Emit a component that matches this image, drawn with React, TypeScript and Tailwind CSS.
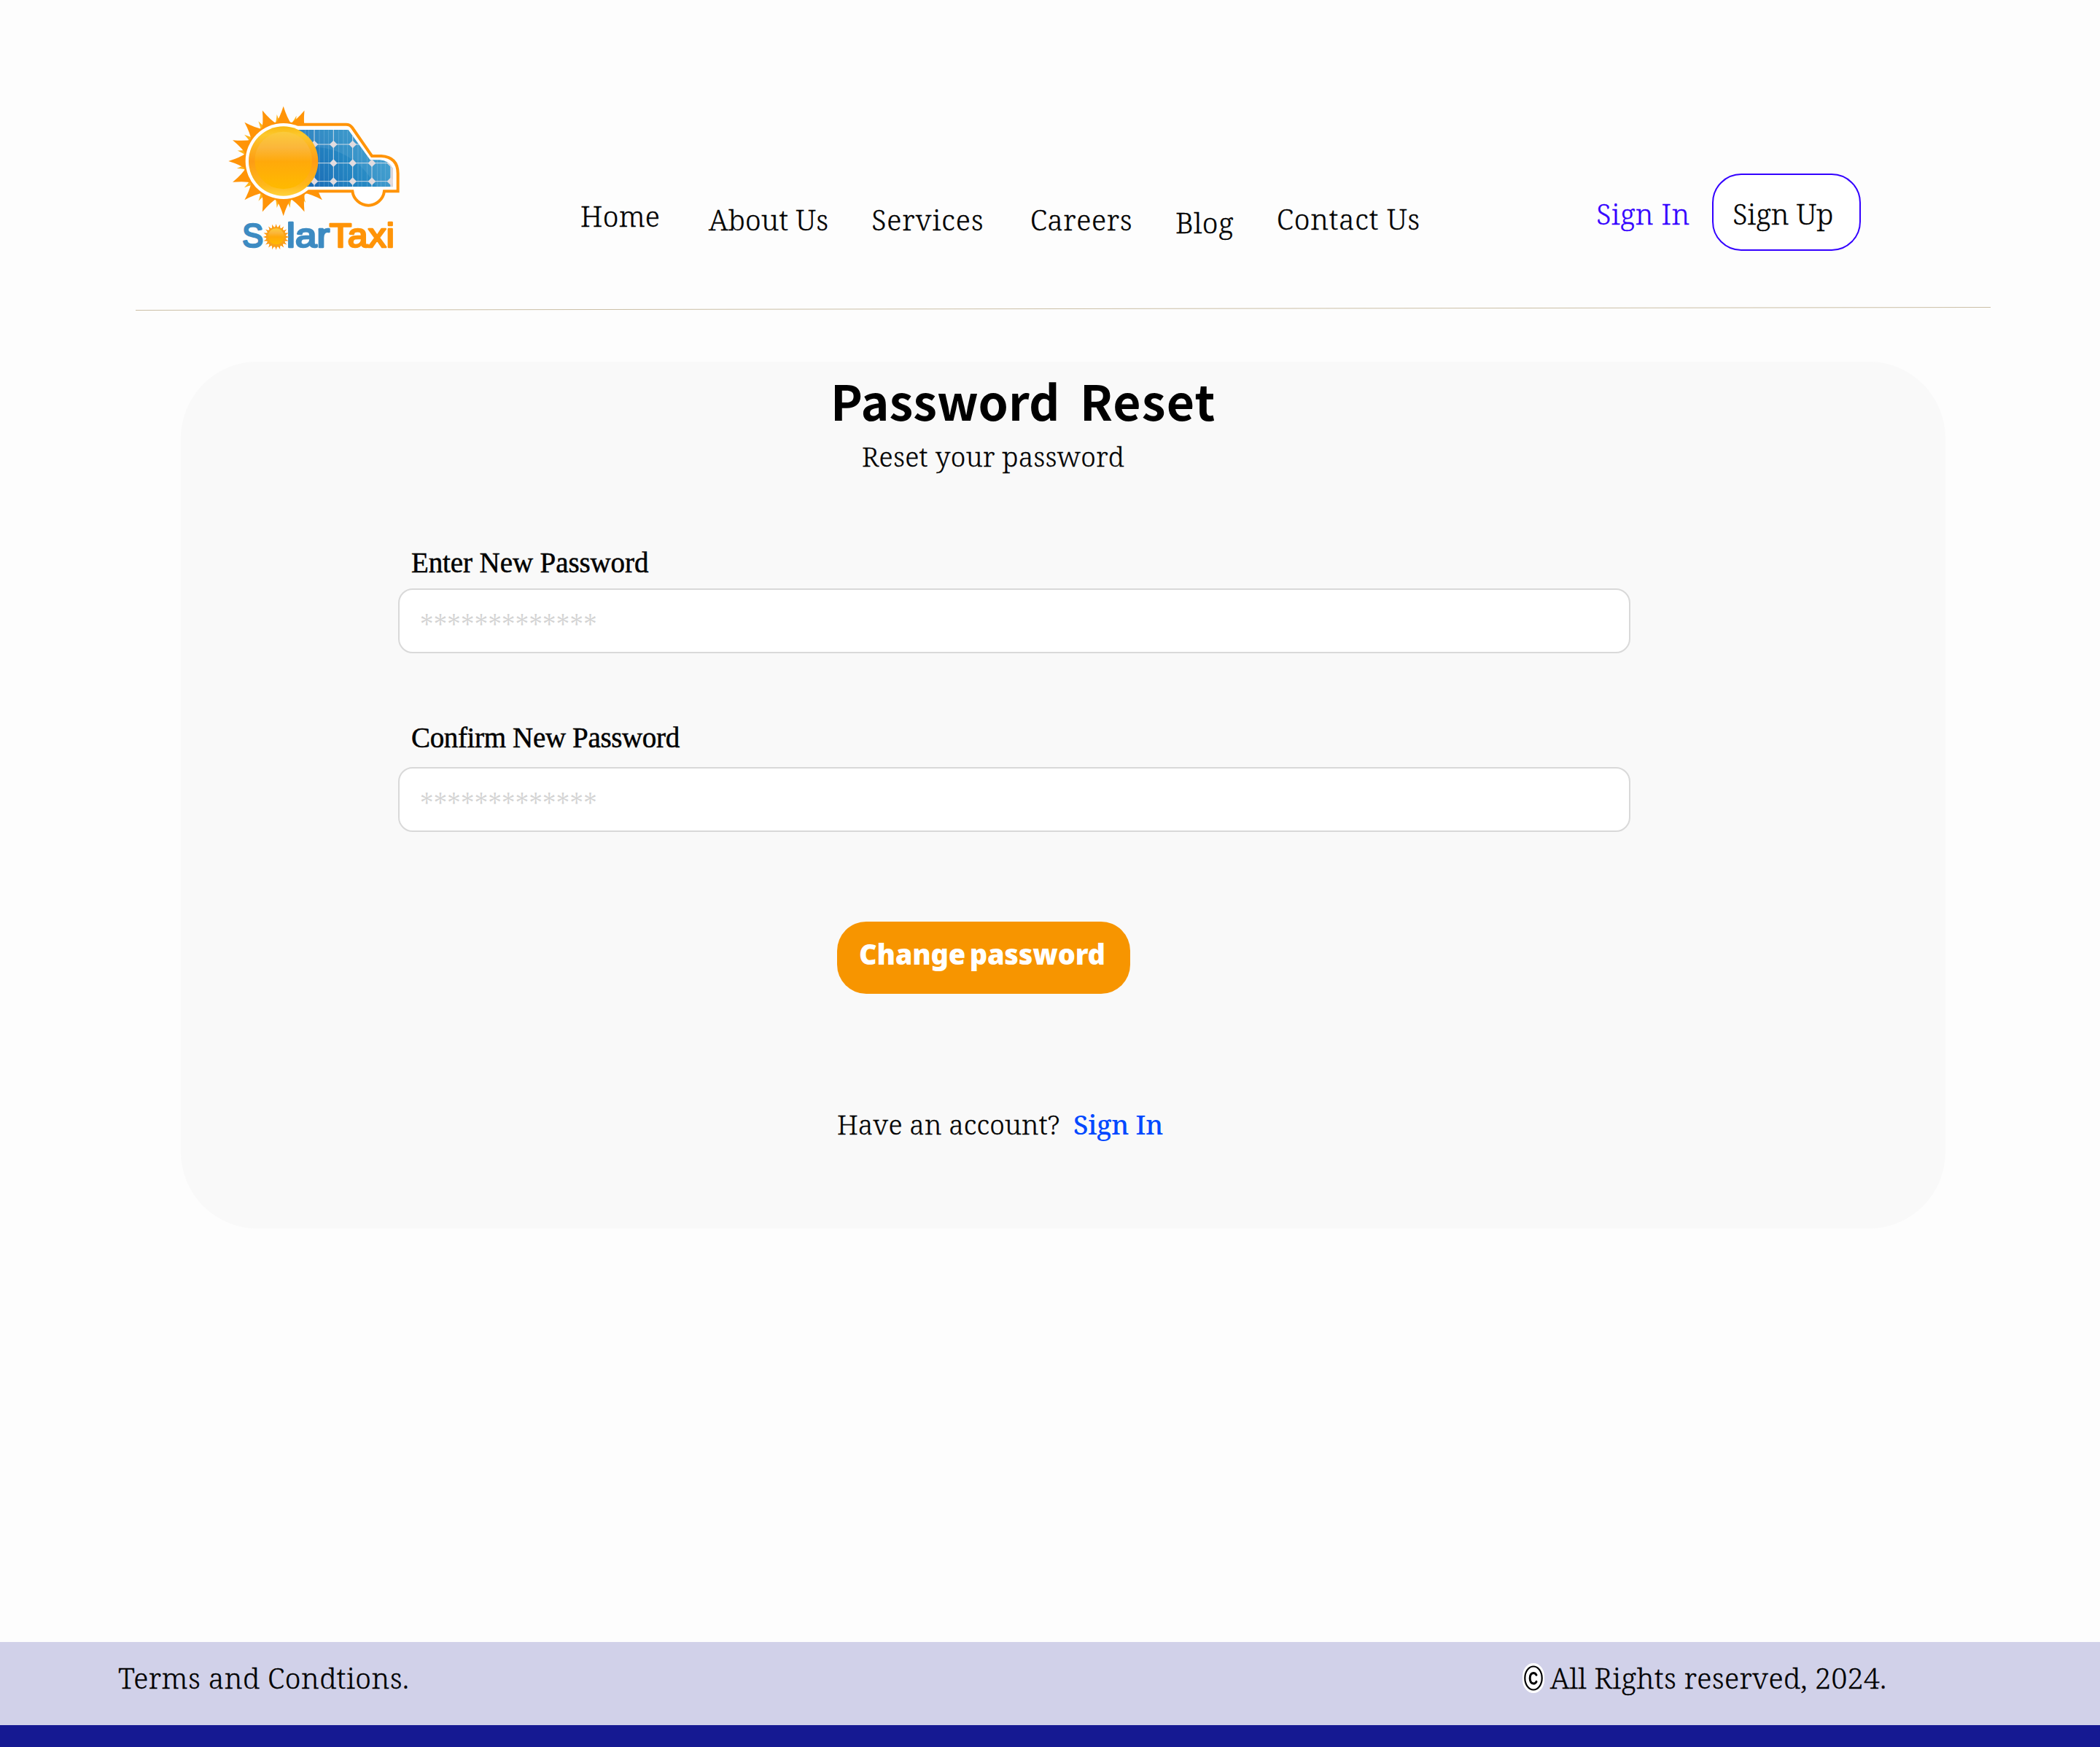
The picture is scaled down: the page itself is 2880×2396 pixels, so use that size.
const CX = 266;
const CY = 273;

/** Concave sun ray pointing outwards at `deg`, from radius `inner` to radius `outer`. */
function ray(cx: number, cy: number, deg: number, half: number, inner: number, outer: number) {
  const at = (d: number, r: number) => {
    const a = (d * Math.PI) / 180;
    return `${(cx + r * Math.cos(a)).toFixed(1)} ${(cy + r * Math.sin(a)).toFixed(1)}`;
  };
  const mid = inner + (outer - inner) * 0.3;
  return `M${at(deg - half, inner)}Q${at(deg - half * 0.4, mid)} ${at(deg, outer)}Q${at(deg + half * 0.4, mid)} ${at(deg + half, inner)}Z`;
}

const bigRays = [-67.5, -90, -112.5, -135, -157.5, 180, 157.5, 135, 112.5, 90, 67.5, 45];
const smallRays = [-74, -98, -122, -146, -167, 171, 146, 122, 98, 82, 62];
const columns = [393, 472, 551, 630, 708];
const rows = [204, 281, 356];
const hairlines = [355, 371, 414, 434, 452, 494, 513, 530, 573, 588, 610, 652, 668, 686];

function Logo() {
  return (
    <svg viewBox="0 0 810 690" className="mt-[130px] ml-[300px] h-[230px] w-[270px] shrink-0">
      <defs>
        <linearGradient id="panel" x1="0" y1="0.6" x2="1" y2="0.2">
          <stop offset="0" stopColor="#1c6bb5" />
          <stop offset="0.45" stopColor="#2486c2" />
          <stop offset="1" stopColor="#3ba0cf" />
        </linearGradient>
        <linearGradient id="rim" x1="0" y1="0" x2="0" y2="1">
          <stop offset="0" stopColor="#f9b80f" />
          <stop offset="0.12" stopColor="#fcc82c" />
          <stop offset="0.5" stopColor="#fd9c14" />
          <stop offset="0.85" stopColor="#ffb81a" />
          <stop offset="1" stopColor="#ffd23c" />
        </linearGradient>
        <linearGradient id="disc" x1="0" y1="0" x2="0" y2="1">
          <stop offset="0" stopColor="#fbcb3c" />
          <stop offset="0.28" stopColor="#fbb63a" />
          <stop offset="0.52" stopColor="#ffa90a" />
          <stop offset="1" stopColor="#ffba00" />
        </linearGradient>
        <clipPath id="cells">
          <path d="M320 144H533L623 268H662Q700 270 717 305V379H350Z" />
        </clipPath>
      </defs>

      {smallRays.map((d) => (
        <path key={d} d={ray(CX, CY, d, 5, 155, 194)} fill="#ffb31a" />
      ))}
      {bigRays.map((d) => (
        <path key={d} d={ray(CX, CY, d, 12.5, 156, 226)} fill="#ff9408" />
      ))}
      <circle cx={CX} cy={CY} r="163" fill="#ff9408" />
      <path d="M300 122H524Q540 122 549 135L630 252H668Q737 256 737 324V397H681A66 66 0 0 1 550 397H320" fill="#fff" stroke="#ff9408" strokeWidth="12" />
      <circle cx={CX} cy={CY} r="156" fill="#fff" />

      <g clipPath="url(#cells)">
        <rect x="310" y="140" width="410" height="242" fill="url(#panel)" />
        <path d="M400 215Q560 225 650 380H720V140H310V215Z" fill="#fff" opacity="0.08" />
        <path d="M707 280h12v102h-12z" fill="#ddd5d8" />
        {hairlines.map((x) => (
          <path key={x} d={`M${x} 140V382`} stroke="#8fc3e2" strokeWidth="2" opacity="0.6" />
        ))}
        {columns.map((x) => (
          <path key={x} d={`M${x} 140V382`} stroke="#cfdce8" strokeWidth="3" />
        ))}
        {rows.map((y) => (
          <path key={y} d={`M310 ${y}H720`} stroke="#cfdce8" strokeWidth="3" />
        ))}
        {rows.map((y) =>
          columns.map((x) => <path key={`${x}-${y}`} d={`M${x - 16} ${y}l16-16 16 16-16 16z`} fill="#e2dcdf" />),
        )}
      </g>

      <circle cx={CX} cy={CY} r="143" fill="url(#rim)" />
      <circle cx={CX} cy={CY - 3} r="118" fill="url(#disc)" />

      <g fontFamily="'Liberation Sans', Arial, sans-serif" fontSize="140" strokeWidth="8" strokeLinejoin="round" strokeLinecap="round">
        <text x="97" y="628" textLength="87" lengthAdjust="spacingAndGlyphs" fill="#3d8bc2" stroke="#3d8bc2">S</text>
        <text x="279" y="628" textLength="178" lengthAdjust="spacingAndGlyphs" fill="#3d8bc2" stroke="#3d8bc2">lar</text>
        <text x="455" y="628" textLength="268" lengthAdjust="spacingAndGlyphs" fill="#ff9408" stroke="#ff9408">Taxi</text>
      </g>
      {Array.from({ length: 20 }, (_, i) => (
        <path key={i} d={ray(236, 585, i * 18, 9, 38, 54)} fill="#ff9408" />
      ))}
      <circle cx="236" cy="585" r="41" fill="#f9a21a" />
      <circle cx="236" cy="583" r="33" fill="url(#disc)" />
    </svg>
  );
}

function Field({ label, className, labelClass, gap }: { label: string; className: string; labelClass: string; gap: string }) {
  return (
    <div className={className}>
      <label className={`${labelClass} ml-[18px] block font-['Liberation_Serif',serif] text-[39px] leading-[48px] [-webkit-text-stroke:0.5px_black]`}>
        {label}
      </label>
      <div className={`${gap} h-[89px] w-[1690px] rounded-[20px] border-2 border-[#d9d9d9] bg-white pt-[25px] pl-[28px] text-[40px] leading-[48px] tracking-[0.12px] text-[#d3d3d3]`}>
        *************
      </div>
    </div>
  );
}

export default function App() {
  return (
    <div className="flex h-[2396px] w-[2880px] flex-col bg-[#fdfdfd] font-['Noto_Serif','DejaVu_Serif',serif] text-[39px] leading-[48px] font-light whitespace-nowrap text-black">
      <header className="flex h-[420px] items-start tracking-[0.45px] [-webkit-text-stroke:0.35px_currentColor]">
        <Logo />
        <nav className="ml-[226px] flex items-start">
          <a className="mt-[272px] w-[176px] tracking-[0.3px]">Home</a>
          <a className="mt-[277px] w-[223px] tracking-[0.25px]">About Us</a>
          <a className="mt-[277px] w-[218px] tracking-[1px]">Services</a>
          <a className="mt-[277px] w-[199px] tracking-[0.7px]">Careers</a>
          <a className="mt-[281px] w-[139px] tracking-[0.4px]">Blog</a>
          <a className="mt-[276px] w-[438px] tracking-[0.9px]">Contact Us</a>
        </nav>
        <a className="mt-[269px] w-[159px] text-[#3300ff]">Sign In</a>
        <a className="mt-[238px] h-[106px] w-[204px] rounded-[40px] border-2 border-[#3300ff] bg-white pt-[29px] pl-[26px] tracking-[0.1px]">
          Sign Up
        </a>
      </header>

      <svg viewBox="0 0 2544 8" className="ml-[186px] h-2 w-[2544px] shrink-0">
        <path d="M0 5.5L2544 1.5" stroke="#cbbfa6" strokeWidth="1" />
      </svg>

      <main className="mt-[68px] ml-[248px] flex h-[1189px] w-[2420px] shrink-0 flex-col items-start rounded-[105px] bg-[#f9f9f9]">
        <h1 className="mt-[12px] ml-[891px] font-['Noto_Sans_CJK_JP',sans-serif] text-[66px] leading-[80px] font-bold tracking-[1.2px] [word-spacing:11px]">
          <span className="tracking-[0.1px]">Password</span> Reset
        </h1>
        <p className="mt-[14px] ml-[934px] text-[37px] tracking-[0.35px] [-webkit-text-stroke:0.35px_currentColor]">
          Reset your password
        </p>

        <Field label="Enter New Password" className="mt-[98px] ml-[298px]" labelClass="tracking-[-0.1px]" gap="mt-[11px]" />
        <Field label="Confirm New Password" className="mt-[92px] ml-[298px]" labelClass="tracking-[-0.35px]" gap="mt-[16px]" />

        <button className="mt-[123px] ml-[900px] h-[99px] w-[402px] rounded-[40px] bg-[#f79500] pt-[20px] pb-[31px] pl-[30px] text-left font-['Noto_Sans',sans-serif] text-[38px] leading-[48px] font-black tracking-[-0.2px] text-white [word-spacing:-4px]">
          Change password
        </button>

        <p className="mt-[155px] ml-[900px] flex text-[37px] tracking-[0.25px]">
          <span className="w-[324px] [-webkit-text-stroke:0.35px_currentColor]">Have an account?</span>
          <a className="font-medium tracking-[-0.2px] text-[#0048ff]">Sign In</a>
        </p>
      </main>

      <footer className="mt-auto">
        <div className="flex h-[114px] items-start bg-[#d1d1e9] [-webkit-text-stroke:0.35px_currentColor]">
          <span className="mt-[25px] ml-[162px] w-[1926px] tracking-[0.55px]">Terms and Condtions.</span>
          <svg viewBox="0 0 30 41" className="mt-[29px] h-[41px] w-[30px] shrink-0" fill="none" stroke="#000">
            <rect width="30" height="41" rx="15" ry="18" fill="#fff" stroke="none" />
            <ellipse cx="15" cy="20.5" rx="11.7" ry="16" strokeWidth="2.2" />
            <path d="M19 16.2Q17.5 13.6 15 13.6Q10.3 14 10.2 20.8Q10.3 27.6 15 28Q17.5 28 19 25.4" strokeWidth="3" strokeLinecap="round" />
          </svg>
          <span className="mt-[25px] ml-[8px] tracking-[0.42px]">All Rights reserved, 2024.</span>
        </div>
        <div className="h-[30px] bg-[#151992]" />
      </footer>
    </div>
  );
}
